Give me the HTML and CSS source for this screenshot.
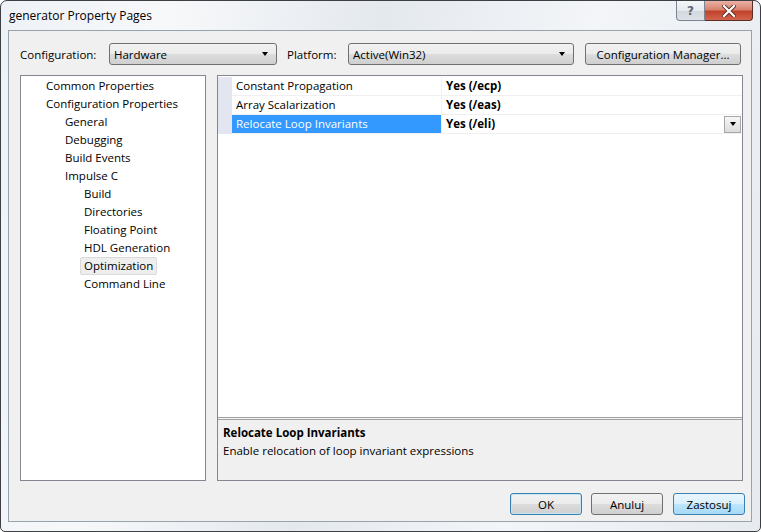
FILE: index.html
```html
<!DOCTYPE html>
<html>
<head>
<meta charset="utf-8">
<link rel="stylesheet" href="styles.css">
</head>
<body>
<div class="window">
  <div class="titlebar">
    <span class="title">generator Property Pages</span>
    <div class="caption-btns">
      <div class="cbtn help">?</div>
      <div class="cbtn close">
        <svg width="14" height="12" viewBox="0 0 14 12">
          <path d="M2 1 L12 11 M12 1 L2 11" stroke="#5a2a22" stroke-width="4" stroke-linecap="square"/>
          <path d="M2 1 L12 11 M12 1 L2 11" stroke="#ffffff" stroke-width="2.2" stroke-linecap="square"/>
        </svg>
      </div>
    </div>
  </div>
  <div class="client">
    <div class="config-row">
      <span class="lbl lbl-config">Configuration:</span>
      <div class="combo combo-config"><span>Hardware</span><span class="arrow"></span></div>
      <span class="lbl lbl-platform">Platform:</span>
      <div class="combo combo-platform"><span>Active(Win32)</span><span class="arrow"></span></div>
      <div class="btn btn-cfgmgr">Configuration Manager...</div>
    </div>
    <div class="panels">
      <div class="tree">
        <div class="node l0">Common Properties</div>
        <div class="node l0">Configuration Properties</div>
        <div class="node l1">General</div>
        <div class="node l1">Debugging</div>
        <div class="node l1">Build Events</div>
        <div class="node l1">Impulse C</div>
        <div class="node l2">Build</div>
        <div class="node l2">Directories</div>
        <div class="node l2">Floating Point</div>
        <div class="node l2">HDL Generation</div>
        <div class="node l2"><span class="sel">Optimization</span></div>
        <div class="node l2">Command Line</div>
      </div>
      <div class="props">
        <div class="grid">
          <div class="row">
            <div class="gutter"></div>
            <div class="name">Constant Propagation</div>
            <div class="value">Yes (/ecp)</div>
          </div>
          <div class="row">
            <div class="gutter"></div>
            <div class="name">Array Scalarization</div>
            <div class="value">Yes (/eas)</div>
          </div>
          <div class="row">
            <div class="gutter"></div>
            <div class="name selected">Relocate Loop Invariants</div>
            <div class="value"><span>Yes (/eli)</span><span class="dd"><span class="arrow"></span></span></div>
          </div>
        </div>
        <div class="splitter"></div>
        <div class="desc">
          <div class="desc-title">Relocate Loop Invariants</div>
          <div class="desc-text">Enable relocation of loop invariant expressions</div>
        </div>
      </div>
    </div>
    <div class="buttons">
      <div class="btn btn-dlg btn-default">OK</div>
      <div class="btn btn-dlg">Anuluj</div>
      <div class="btn btn-dlg btn-hot">Zastosuj</div>
    </div>
  </div>
</div>
</body>
</html>
```
FILE: styles.css
```css
html, body {
  margin: 0;
  padding: 0;
  background: #ffffff;
}
body {
  font-family: "Open Sans", "Noto Sans", sans-serif;
  font-size: 11.5px;
  color: #000;
}
.window {
  box-sizing: border-box;
  width: 761px;
  height: 532px;
  border: 1px solid #3c3f44;
  border-radius: 7px 7px 5px 5px;
  background: linear-gradient(100deg, #eef2f6 0%, #f7f8fa 20%, #e4e9ee 45%, #f3f5f8 70%, #e6ebf0 100%);
  display: flex;
  flex-direction: column;
}
.titlebar {
  height: 29px;
  display: flex;
  align-items: flex-start;
  justify-content: space-between;
  flex-shrink: 0;
}
.title {
  font-size: 12px;
  margin: 6px 0 0 8px;
  color: #000;
}
.caption-btns {
  display: flex;
  margin-right: 7px;
}
.cbtn {
  box-sizing: border-box;
  height: 20px;
  display: flex;
  align-items: center;
  justify-content: center;
}
.help {
  width: 29px;
  border: 1px solid #7c8594;
  border-top: none;
  border-radius: 0 0 0 4px;
  background: linear-gradient(#f4f6f8 0%, #e6e9ee 50%, #d2d7de 51%, #dde2e8 100%);
  color: #5b6574;
  font-family: "DejaVu Sans", sans-serif;
  font-size: 12px;
  font-weight: bold;
}
.close {
  width: 48px;
  border: 1px solid #5c2d25;
  border-left: none;
  border-top: none;
  border-radius: 0 0 4px 0;
  background: linear-gradient(#eab2a5 0%, #d9826f 45%, #c2432b 55%, #d1654c 100%);
}
.client {
  flex: 1;
  margin: 0 8px 9px 7px;
  border: 1px solid #98a3ae;
  background: #f0f0f0;
  display: flex;
  flex-direction: column;
}
.config-row {
  display: flex;
  align-items: center;
  padding: 12px 0 0 11px;
  height: 22px;
}
.lbl {
  flex-shrink: 0;
}
.lbl-config { width: 89px; }
.lbl-platform { width: 61px; margin-left: 10px; }
.combo, .btn {
  box-sizing: border-box;
  height: 22px;
  border: 1px solid #707070;
  border-radius: 3px;
  background: linear-gradient(#f2f2f2 0%, #ebebeb 50%, #dddddd 51%, #cfcfcf 100%);
  display: flex;
  align-items: center;
}
.combo {
  justify-content: space-between;
  padding: 0 8px 0 4px;
}
.combo-config { width: 168px; }
.combo-platform { width: 226px; }
.arrow {
  width: 0;
  height: 0;
  border-left: 3.5px solid transparent;
  border-right: 3.5px solid transparent;
  border-top: 4px solid #000;
}
.btn {
  justify-content: center;
}
.btn-cfgmgr {
  width: 156px;
  margin-left: 11px;
}
.panels {
  display: flex;
  gap: 11px;
  margin: 10px 0 0 11px;
  height: 406px;
}
.tree {
  box-sizing: border-box;
  width: 186px;
  height: 406px;
  border: 1px solid #828790;
  background: #fff;
  padding-top: 1px;
}
.node {
  height: 18px;
  line-height: 18px;
  white-space: nowrap;
}
.l0 { padding-left: 25px; }
.l1 { padding-left: 44px; }
.l2 { padding-left: 63px; }
.sel {
  display: inline-block;
  box-sizing: border-box;
  height: 18px;
  line-height: 16px;
  margin-left: -4px;
  padding: 0 3px;
  border: 1px solid #dadada;
  border-radius: 2px;
  background: #eeeeee;
}
.props {
  box-sizing: border-box;
  width: 526px;
  height: 406px;
  border: 1px solid #828790;
  display: flex;
  flex-direction: column;
}
.grid {
  flex: 1;
  background: #fff;
  padding-top: 1px;
}
.row {
  display: flex;
  height: 19px;
  box-sizing: border-box;
  border-bottom: 1px solid #f0f0f0;
}
.gutter {
  width: 14px;
  background: #e3e6f1;
  flex-shrink: 0;
  margin-bottom: -1px;
}
.name {
  width: 210px;
  box-sizing: border-box;
  padding-left: 4px;
  line-height: 18px;
  border-right: 1px solid #f0f0f0;
  white-space: nowrap;
}
.name.selected {
  background: #3399ff;
  color: #fff;
}
.value {
  flex: 1;
  padding-left: 4px;
  font-weight: bold;
  line-height: 18px;
  display: flex;
  justify-content: space-between;
  align-items: center;
}
.dd {
  box-sizing: border-box;
  width: 17px;
  height: 17px;
  margin-right: 1px;
  border: 1px solid #a7a7a7;
  background: linear-gradient(#f7f7f7, #dcdcdc);
  display: flex;
  align-items: center;
  justify-content: center;
}
.splitter {
  height: 1px;
  border-top: 1px solid #a0a0a0;
  border-bottom: 1px solid #a0a0a0;
  background: #f4f4f4;
}
.desc {
  height: 60px;
  background: #f0f0f0;
  padding: 4px 0 0 5px;
  box-sizing: border-box;
}
.desc-title, .desc-text {
  line-height: 18px;
}
.desc-title { font-weight: bold; }
.buttons {
  display: flex;
  justify-content: flex-end;
  margin: 12px 6px 0 0;
}
.btn-dlg {
  width: 72px;
  margin-left: 9px;
}
.btn-dlg:last-child { margin-left: 10px; }
.btn-default {
  border-color: #3c7fb1;
  box-shadow: inset 0 0 0 1px #c4e5f6;
}
.btn-hot {
  border-color: #3c7fb1;
  background: linear-gradient(#eaf6fd 0%, #d9f0fc 50%, #bee6fd 51%, #a7d9f5 100%);
}
```
